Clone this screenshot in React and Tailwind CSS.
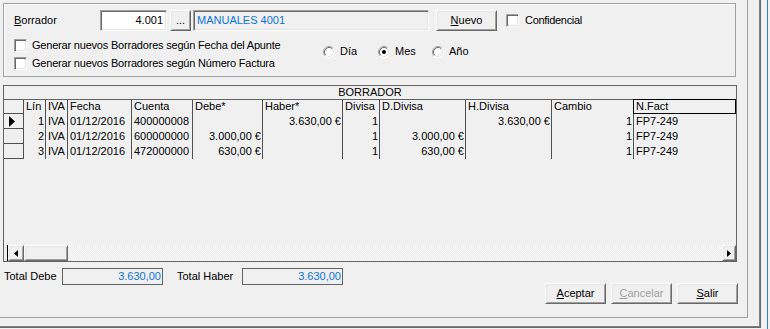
import React from "react";

const RAISED =
  "border border-t-white border-l-white border-r-[#696969] border-b-[#696969] shadow-[inset_1px_1px_0_#e3e3e3,inset_-1px_-1px_0_#a0a0a0] bg-[#f0f0f0]";
const SUNKEN =
  "border border-t-[#a0a0a0] border-l-[#a0a0a0] border-r-white border-b-white shadow-[inset_1px_1px_0_#696969,inset_-1px_-1px_0_#e3e3e3]";

function Btn({ className = "", children }) {
  return (
    <div className={`flex items-center justify-center ${RAISED} ${className}`}>
      {children}
    </div>
  );
}

function Check({ label }) {
  return (
    <div className="flex items-center h-[15px]">
      <div className={`w-[13px] h-[13px] bg-white ${SUNKEN}`} />
      <span className="ml-[5px] whitespace-nowrap tracking-[-0.2px]">{label}</span>
    </div>
  );
}

function Radio({ label, checked, className = "" }) {
  return (
    <div className={`flex items-center h-[13px] ${className}`}>
      <svg width="12" height="12" viewBox="0 0 12 12" className="shrink-0">
        <circle cx="6" cy="6" r="5" fill="#ffffff" />
        <path d="M2.11 9.89 A5.5 5.5 0 0 1 9.89 2.11" fill="none" stroke="#a0a0a0" strokeWidth="1" />
        <path d="M9.89 2.11 A5.5 5.5 0 0 1 2.11 9.89" fill="none" stroke="#ffffff" strokeWidth="1" />
        <path d="M2.82 9.18 A4.5 4.5 0 0 1 9.18 2.82" fill="none" stroke="#696969" strokeWidth="1" />
        <path d="M9.18 2.82 A4.5 4.5 0 0 1 2.82 9.18" fill="none" stroke="#e3e3e3" strokeWidth="1" />
        {checked && <circle cx="6" cy="6" r="2" fill="#000000" />}
      </svg>
      <span className="ml-[5px]">{label}</span>
    </div>
  );
}

const cols = [
  { label: "Lín", w: "w-[22px]", right: true },
  { label: "IVA", w: "w-[22px]", right: false },
  { label: "Fecha", w: "w-[64px]", right: false },
  { label: "Cuenta", w: "w-[61px]", right: false },
  { label: "Debe*", w: "w-[70px]", right: true },
  { label: "Haber*", w: "w-[80px]", right: true },
  { label: "Divisa", w: "w-[37px]", right: true },
  { label: "D.Divisa", w: "w-[86px]", right: true },
  { label: "H.Divisa", w: "w-[86px]", right: true },
  { label: "Cambio", w: "w-[82px]", right: true },
];

const rows = [
  ["1", "IVA", "01/12/2016", "400000008", "", "3.630,00 €", "1", "", "3.630,00 €", "1", "FP7-249"],
  ["2", "IVA", "01/12/2016", "600000000", "3.000,00 €", "", "1", "3.000,00 €", "", "1", "FP7-249"],
  ["3", "IVA", "01/12/2016", "472000000", "630,00 €", "", "1", "630,00 €", "", "1", "FP7-249"],
];

function Grid() {
  return (
    <div className="ml-[3px] mt-[8px] w-[734px] h-[177px] border border-[#646464] flex flex-col">
      <div className="h-[14px] shrink-0 border-b border-[#646464] text-center leading-[13px]">
        BORRADOR
      </div>
      <div className="h-[14px] shrink-0 flex">
        <div className="w-[20px] border-r border-b border-[#505050]" />
        {cols.map((c) => (
          <div
            key={c.label}
            className={`${c.w} border-r border-[#505050] pl-[2px] leading-[13px] whitespace-nowrap overflow-hidden`}
          >
            {c.label}
          </div>
        ))}
        <div className="relative w-[102px] pl-[2px] leading-[13px]">
          <div className="absolute -top-px -left-px right-0 bottom-0 border border-black" />
          N.Fact
        </div>
      </div>
      {rows.map((r, i) => (
        <div key={i} className="h-[15px] shrink-0 flex">
          <div className="w-[20px] border-r border-b border-[#505050] flex items-center pl-[5px]">
            {i === 0 && (
              <svg width="6" height="11" viewBox="0 0 6 11">
                <polygon points="0,0 6,5.5 0,11" fill="#000000" />
              </svg>
            )}
          </div>
          {cols.map((c, j) => (
            <div
              key={j}
              className={`${c.w} border-r border-[#505050] pl-[2px] pr-[1px] leading-[15px] whitespace-nowrap overflow-hidden ${
                c.right ? "text-right" : "text-left"
              }`}
            >
              {r[j]}
            </div>
          ))}
          <div className="w-[102px] pl-[2px] leading-[15px] whitespace-nowrap">{r[10]}</div>
        </div>
      ))}
      <div className="flex-1" />
      <div className="h-[16px] shrink-0 flex">
        <div className="w-[3px]" />
        <div className="w-px bg-black" />
        <div className={`w-[16px] ${RAISED} flex items-center justify-center`}>
          <svg width="4" height="7" viewBox="0 0 4 7">
            <polygon points="4,0 0,3.5 4,7" fill="#000000" />
          </svg>
        </div>
        <div className={`w-[44px] ${RAISED}`} />
        <div className="flex-1 bg-[repeating-conic-gradient(#ffffff_0%_25%,#e8e8e8_0%_50%)] bg-[length:2px_2px]" />
        <div className={`w-[14px] ${RAISED} flex items-center justify-center`}>
          <svg width="4" height="7" viewBox="0 0 4 7">
            <polygon points="0,0 4,3.5 0,7" fill="#000000" />
          </svg>
        </div>
      </div>
    </div>
  );
}

export default function App() {
  return (
    <div className="w-[770px] h-[329px] bg-[#f0f0f0] flex overflow-hidden text-[11px] leading-[13px] text-black font-['Liberation_Sans',Arial,sans-serif]">
      <div className="w-[761px] h-[328px] shrink-0 border-r border-b border-[#696969]">
        <div className="w-full h-full border-r border-b border-[#808080]">
          <div className="w-[748px] h-[318px] border-r border-b border-[#a0a0a0] flex flex-col">
            {/* Group box */}
            <div className="ml-[3px] mt-[3px] w-[733px] h-[74px] shrink-0 border border-[#a0a0a0] shadow-[inset_1px_1px_0_#ffffff] flex flex-col">
              <div className="mt-[6px] h-[21px] flex items-center">
                <div className="w-[96px] pl-[10px]">
                  <span className="underline">B</span>orrador
                </div>
                <div className={`w-[67px] h-[21px] bg-white ${SUNKEN} text-right pr-[3px] leading-[19px]`}>
                  4.001
                </div>
                <Btn className="ml-[3px] w-[21px] h-[21px] leading-[13px]">...</Btn>
                <div className={`ml-[2px] w-[236px] h-[21px] ${SUNKEN} pl-[3px] leading-[19px] text-[#0a74da]`}>
                  MANUALES 4001
                </div>
                <Btn className="ml-[7px] w-[61px] h-[21px] -mt-[1px]">
                  <span>
                    <span className="underline">N</span>uevo
                  </span>
                </Btn>
                <div className={`ml-[9px] w-[13px] h-[13px] bg-white ${SUNKEN}`} />
                <span className="ml-[6px] tracking-[-0.3px]">Confidencial</span>
              </div>
              <div className="mt-[7px] flex">
                <div className="w-[319px] pl-[10px] flex flex-col">
                  <Check label="Generar nuevos Borradores según Fecha del Apunte" />
                  <div className="mt-[3px]">
                    <Check label="Generar nuevos Borradores según Número Factura" />
                  </div>
                </div>
                <div className="mt-[7px] flex">
                  <Radio label="Día" className="w-[55px]" />
                  <Radio label="Mes" checked className="w-[54px]" />
                  <Radio label="Año" />
                </div>
              </div>
            </div>

            <Grid />

            {/* Totals + buttons */}
            <div className="mt-[6px] flex items-start">
              <div className="flex items-center h-[17px] pl-[4px]">
                <span className="w-[58px]">Total Debe</span>
                <div className="w-[101px] h-[17px] border border-[#646464] text-right pr-[1px] leading-[15px] text-[#0a74da]">
                  3.630,00
                </div>
                <span className="ml-[14px] w-[65px]">Total Haber</span>
                <div className="w-[101px] h-[17px] border border-[#646464] text-right pr-[1px] leading-[15px] text-[#0a74da]">
                  3.630,00
                </div>
              </div>
              <div className="ml-auto mr-[9px] mt-[15px] flex">
                <Btn className="w-[61px] h-[21px]">
                  <span>
                    <span className="underline">A</span>ceptar
                  </span>
                </Btn>
                <Btn className="ml-[5px] w-[61px] h-[21px] text-[#a0a0a0]">
                  <span>
                    <span className="underline">C</span>ancelar
                  </span>
                </Btn>
                <Btn className="ml-[5px] w-[61px] h-[21px]">
                  <span>
                    <span className="underline">S</span>alir
                  </span>
                </Btn>
              </div>
            </div>
          </div>
        </div>
      </div>
      <div className="w-[6px] shrink-0" />
      <div className="w-px h-full shrink-0 bg-[#2f7fd4]" />
    </div>
  );
}
